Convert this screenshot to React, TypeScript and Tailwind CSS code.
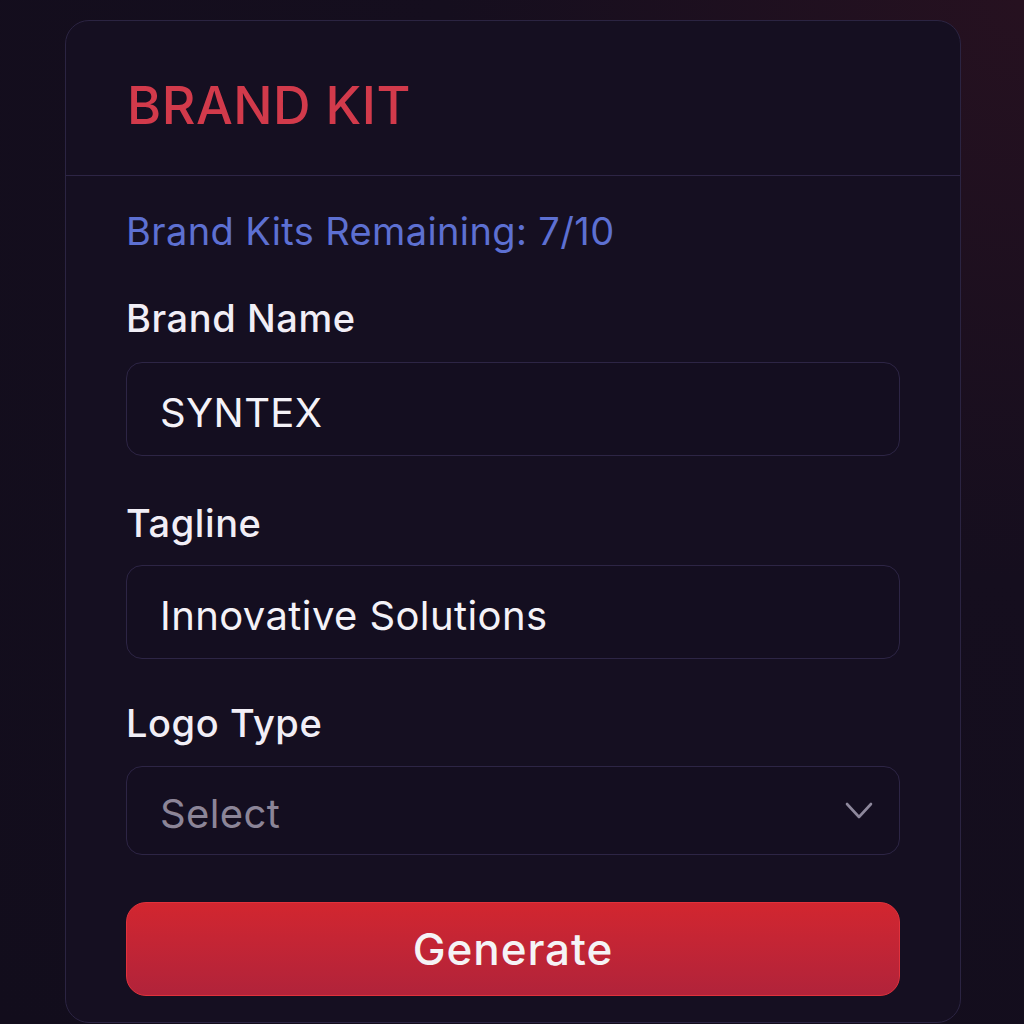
const font = { fontFamily: "Inter, 'Noto Sans', sans-serif" };

function Label({ text, top }: { text: string; top: string }) {
  return (
    <label className={`${top} text-[38px] leading-none font-medium tracking-[0.015em] text-[#f1eef6]`}>{text}</label>
  );
}

function Field({ label, value, top, gap }: { label: string; value: string; top: string; gap: string }) {
  return (
    <div className="flex flex-col">
      <Label text={label} top={top} />
      <div className={`${gap} h-[94px] rounded-[16px] border border-[#2d2545] bg-[#140e20] flex items-center pl-[33px] pt-[8px]`}>
        <span className="text-[40px] leading-none tracking-[0.01em] text-[#f4f2f8]">{value}</span>
      </div>
    </div>
  );
}

export default function App() {
  return (
    <div
      style={font}
      className="w-[1024px] h-[1024px] overflow-hidden bg-[radial-gradient(ellipse_at_top_right,#261120_0%,#150e1e_40%,#120d1c_100%)] pt-[20px] pl-[65px]"
    >
      <div className="w-[896px] h-[1003px] rounded-[24px] border border-[#2b2442] bg-[#150f21] flex flex-col">
        <div className="h-[155px] border-b border-[#2d2545] px-[61px] pt-[59px]">
          <h1 className="text-[52px] leading-none font-medium text-[#d23a4b] tracking-[0.01em]">BRAND KIT</h1>
        </div>

        <div className="px-[60px] flex flex-col">
          <p className="mt-[36px] text-[38px] leading-none tracking-[0.01em] text-[#5d70d2]">Brand Kits Remaining: 7/10</p>

          <Field label="Brand Name" value="SYNTEX" top="mt-[49px]" gap="mt-[25px]" />
          <Field label="Tagline" value="Innovative Solutions" top="mt-[48px]" gap="mt-[23px]" />

          <div className="flex flex-col">
            <Label text="Logo Type" top="mt-[45px]" />
            <div className="mt-[24px] h-[89px] rounded-[16px] border border-[#2d2545] bg-[#140e20] flex items-center justify-between pl-[33px] pr-[26px] pt-[6px]">
              <span className="text-[40px] leading-none tracking-[0.01em] text-[#8c8598]">Select</span>
              <svg width="28" height="18" viewBox="0 0 28 18" className="-mt-[6px]" fill="none">
                <polyline points="2,2 14,15 26,2" stroke="#8e889c" strokeWidth="2.6" strokeLinecap="round" strokeLinejoin="round" />
              </svg>
            </div>
          </div>

          <button className="mt-[47px] h-[94px] rounded-[20px] border border-[#e0323c] bg-gradient-to-b from-[#d2262f] to-[#b1233a] flex items-center justify-center">
            <span className="text-[44px] leading-none font-medium tracking-[0.02em] text-[#f5f3f6]">Generate</span>
          </button>
        </div>
      </div>
    </div>
  );
}
